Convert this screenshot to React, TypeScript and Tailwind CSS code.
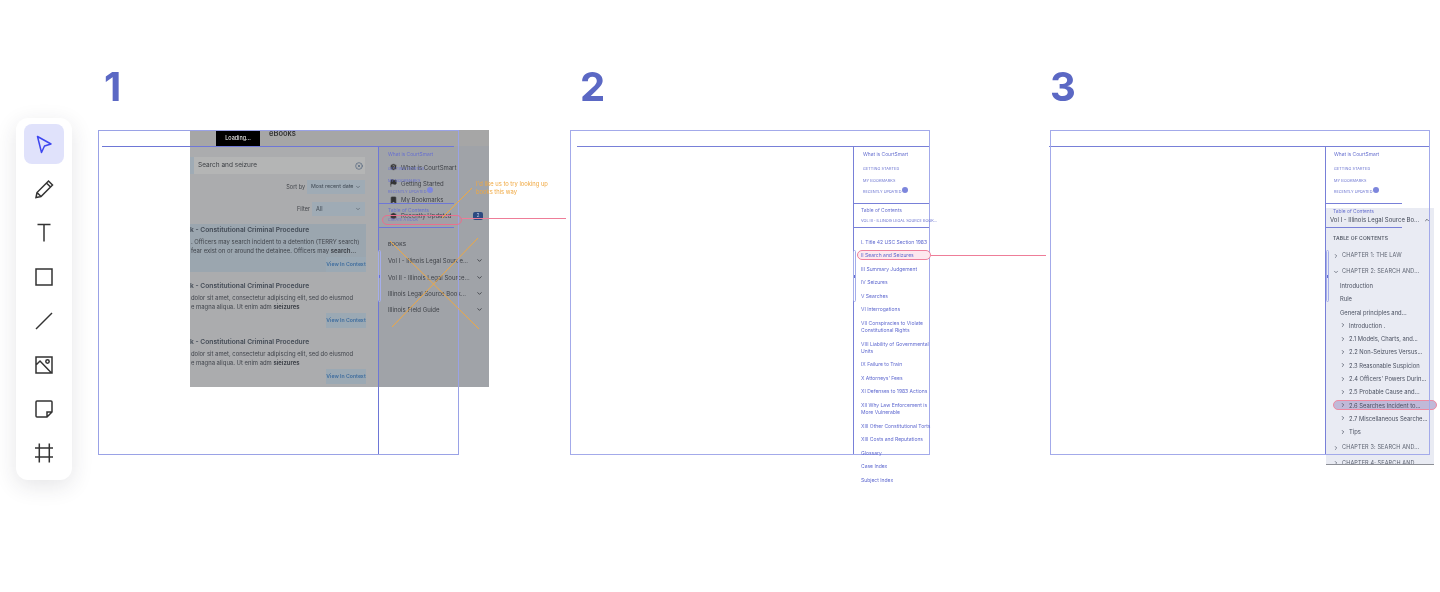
import { ChevronDown, ChevronRight, ChevronUp, CircleHelp, Flag, Bookmark, Clock, CircleX } from "lucide-react";

const tocItems = [
  "I. Title 42 USC Section 1983",
  "II Search and Seizures",
  "III Summary Judgement",
  "IV Seizures",
  "V Searches",
  "VI Interrogations",
  "VII Conspiracies to Violate\nConstitutional Rights",
  "VIII Liability of Governmental\nUnits",
  "IX Failure to Train",
  "X Attorneys' Fees",
  "XI Defenses to 1983 Actions",
  "XII Why Law Enforcement is\nMore Vulnerable",
  "XIII Other Constitutional Torts",
  "XIII Costs and Reputations",
  "Glossary",
  "Case Index",
  "Subject Index",
];

const subChapters = [
  "Introduction .",
  "2.1 Models, Charts, and...",
  "2.2 Non-Seizures Versus...",
  "2.3 Reasonable Suspicion",
  "2.4 Officers' Powers Durin...",
  "2.5 Probable Cause and...",
  "2.6 Searches Incident to...",
  "2.7 Miscellaneous Searche...",
  "Tips",
];

const books = ["Vol I - Illinois Legal Source...", "Vol II - Illinois Legal Source...", "Illinois Legal Source Book...", "Illinois Field Guide"];

function Toolbar() {
  const icon = "w-6 h-6 fill-none stroke-[#333] stroke-[1.5]";
  return (
    <div className="absolute left-4 top-[118px] w-14 h-[362px] bg-white rounded-xl shadow-[0_6px_22px_rgba(40,40,60,0.12)] flex flex-col items-center pt-[6px]">
      <button className="w-10 h-10 shrink-0 rounded-lg bg-[#e0e2fb] flex items-center justify-center">
        <svg viewBox="0 0 24 24" className="w-6 h-6 fill-none stroke-[#3d46f0] stroke-[1.5]">
          <path d="M5.5 4.500 19 12 12.500 14 9.500 20.500Z" strokeLinejoin="round" />
        </svg>
      </button>
      <div className="flex flex-col items-center gap-5 mt-[13px]">
        <svg viewBox="0 0 24 24" className={icon}>
          <path d="M4 20.500 5 15.500 16.500 4 20.500 8 9 19.500ZM14.500 6 18.500 10M5 15.500 9 19.500" />
        </svg>
        <svg viewBox="0 0 24 24" className={icon}>
          <path d="M5.500 3.500h13M12 3.500v17" />
        </svg>
        <svg viewBox="0 0 24 24" className={icon}>
          <path d="M4 4h16v16H4z" />
        </svg>
        <svg viewBox="0 0 24 24" className={icon}>
          <path d="M4 20 20 4" />
        </svg>
        <svg viewBox="0 0 24 24" className={icon}>
          <path d="M4 4h16v16H4zM4 12l4-4 11 11.500" />
          <circle cx="15.500" cy="8.500" r="1.700" />
        </svg>
        <svg viewBox="0 0 24 24" className={icon}>
          <path d="M15 20H5a1 1 0 0 1-1-1V5a1 1 0 0 1 1-1h14a1 1 0 0 1 1 1v10ZM15 20v-5h5" />
        </svg>
        <svg viewBox="0 0 24 24" className={icon}>
          <path d="M7.300 2.500v19M17.300 2.500v19M3 7h18M3 16h18" />
        </svg>
      </div>
    </div>
  );
}

function ResultCard({ tinted, lines }: { tinted?: boolean; lines: React.ReactNode[] }) {
  return (
    <div className={`w-[176px] h-[48px] pt-[1px] relative ${tinted ? "bg-[#9ba6af]" : ""}`}>
      <div className="text-[6.700px] leading-[10px] font-semibold text-[#434b56] whitespace-nowrap">k - Constitutional Criminal Procedure</div>
      <div className="mt-[1.500px] text-[5.900px] leading-[9px] text-[#41454c] whitespace-nowrap pl-[1px]">
        {lines.map((l, i) => (
          <div key={i}>{l}</div>
        ))}
      </div>
      <div className="absolute right-0 bottom-0 w-10 h-[15px] bg-[#9ba9b4] flex items-center justify-center text-[5.200px] font-semibold text-[#3f6d9e] whitespace-nowrap">
        View In Context
      </div>
    </div>
  );
}

function ScreenOverlay() {
  return (
    <div className="absolute left-[190px] top-[130px] w-[299px] h-[257px] bg-[#abacae] overflow-hidden flex flex-col">
      <div className="h-[16px] shrink-0 bg-[#a6a6a6] flex items-start">
        <div className="ml-[26px] w-[44px] h-[16px] bg-black text-white text-[5.500px] flex items-center justify-center">Loading...</div>
        <div className="ml-[9px] text-[7.500px] leading-[8px] font-semibold text-[#333]">eBooks</div>
      </div>
      <div className="flex flex-1">
        <div className="w-[188px] shrink-0">
          <div className="mt-[11px] w-[175px] h-[17px] bg-[#b4b5b5] border-l-[4px] border-[#9fabb5] flex items-center justify-between pl-[4px] pr-[2px] text-[6.500px] text-[#3e4146]">
            Search and seizure
            <CircleX className="w-[8px] h-[8px] text-[#4c5f78]" />
          </div>
          <div className="mt-[6px] w-[175px] h-[14px] flex items-center justify-end gap-[2px] text-[5.500px] text-[#44474c] whitespace-nowrap">
            Sort by
            <div className="w-[58px] h-[14px] bg-[#9fabb5] flex items-center justify-between px-[4px] text-[5.300px] text-[#3f4852]">
              Most recent date
              <ChevronDown className="w-[6px] h-[6px]" />
            </div>
          </div>
          <div className="mt-[8px] w-[175px] h-[14px] flex items-center justify-end gap-[2px] text-[5.500px] text-[#44474c]">
            Filter
            <div className="w-[53px] h-[14px] bg-[#9fabb5] flex items-center justify-between px-[4px] text-[#3f4852]">
              All
              <ChevronDown className="w-[6px] h-[6px]" />
            </div>
          </div>
          <div className="mt-[8px] flex flex-col gap-[8px]">
            <ResultCard
              tinted
              lines={[
                ". Officers may search incident to a detention (TERRY search)",
                <>
                  fear exist on or around the detainee. Officers may <b>search...</b>
                </>,
              ]}
            />
            <ResultCard
              lines={[
                "dolor sit amet, consectetur adipiscing elit, sed do eiusmod",
                <>
                  e magna aliqua. Ut enim adm <b>sieizures</b>
                </>,
              ]}
            />
            <ResultCard
              lines={[
                "dolor sit amet, consectetur adipiscing elit, sed do eiusmod",
                <>
                  e magna aliqua. Ut enim adm <b>sieizures</b>
                </>,
              ]}
            />
          </div>
        </div>
        <div className="flex-1 bg-[#a0a3a8] pl-[14px] pr-[6px] text-[#3f4248]">
          <div className="mt-[17px] flex flex-col gap-[8.300px] text-[6px] leading-[7px]">
            <div className="flex items-center gap-[3px] -ml-[3px]">
              <CircleHelp className="w-[9px] h-[8px] fill-[#333] text-[#a0a3a8]" />
              <span>What is CourtSmart</span>
            </div>
            <div className="flex items-center gap-[3px] -ml-[3px]">
              <Flag className="w-[9px] h-[8px] fill-[#333] text-[#333]" />
              <span>Getting Started</span>
            </div>
            <div className="flex items-center gap-[3px] -ml-[3px]">
              <Bookmark className="w-[9px] h-[8px] fill-[#333] text-[#333]" />
              <span>My Bookmarks</span>
            </div>
            <div className="flex items-center gap-[3px] -ml-[3px]">
              <Clock className="w-[9px] h-[8px] fill-[#333] text-[#a0a3a8]" />
              <span>Recently Updated</span>
              <span className="ml-auto w-[10px] h-[8px] rounded-[2px] bg-[#2c4a80] text-[#b8c4e0] text-[5px] flex items-center justify-center">2</span>
            </div>
          </div>
          <div className="mt-[21px] -ml-[4px] text-[5px] leading-[7px] font-medium tracking-wide">BOOKS</div>
          <div className="mt-[9.500px] -ml-[4px] flex flex-col gap-[9.300px] text-[6px] leading-[7px]">
            {books.map((b) => (
              <div key={b} className="flex items-center justify-between">
                <span className="whitespace-nowrap">{b}</span>
                <ChevronDown className="w-[7px] h-[7px] stroke-[3]" />
              </div>
            ))}
          </div>
        </div>
      </div>
    </div>
  );
}

function NavColumn() {
  return (
    <>
      <div className="text-[4.900px] leading-[7px] mt-[4px]">What is CourtSmart</div>
      <div className="mt-[7px] flex flex-col gap-[5px] text-[3.800px] leading-[7px] tracking-wide">
        <div>GETTING STARTED</div>
        <div>MY BOOKMARKS</div>
        <div className="flex items-center gap-[1px] -mt-[1px] tracking-normal">
          RECENTLY UPDATED
          <span className="w-[6px] h-[6px] rounded-full bg-[#7d86dc] -mt-[3px]" />
        </div>
      </div>
    </>
  );
}

function ScrollHandle({ className }: { className: string }) {
  return (
    <div className={`absolute w-[3px] h-[52px] rounded-sm border border-[#a5aeea] flex items-center ${className}`}>
      <span className="w-[2px] h-[3px] bg-[#6770cf]" />
    </div>
  );
}

function FrameOne() {
  return (
    <>
      <ScreenOverlay />
      <div className="absolute left-[98px] top-[130px] w-[361px] h-[325px] border border-[#9aa2e6]" />
      <div className="absolute left-[102px] top-[146px] w-[352px] h-px bg-[#6e77d6]" />
      <div className="absolute left-[378px] top-[146px] w-px h-[308px] bg-[#6e77d6]" />
      <div className="absolute left-[378px] top-[203px] w-[76px] h-px bg-[#6e77d6]" />
      <div className="absolute left-[378px] top-[227px] w-[76px] h-px bg-[#6e77d6]" />
      <ScrollHandle className="left-[378px] top-[250px]" />
      <div className="absolute left-[388px] top-[147px] text-[#6770cf] whitespace-nowrap">
        <NavColumn />
      </div>
      <div className="absolute left-[388px] top-[207px] text-[#6770cf] whitespace-nowrap">
        <div className="text-[4.900px] leading-[7px]">Table of Contents</div>
        <div className="mt-[2px] text-[3.800px] leading-[7px]">CREATE A BOOK</div>
      </div>
      <div className="absolute left-[382px] top-[215px] w-[80px] h-[10px] rounded-full border border-[#e8708e] bg-[#ee7d98]/5" />
      <div className="absolute left-[462px] top-[218px] w-[104px] h-px bg-[#ee7d98]" />
      <div className="absolute left-[476px] top-[180px] w-[80px] text-[5.800px] leading-[8px] text-[#f0a840]">
        I'd like us to try looking up books this way
      </div>
      <svg className="absolute left-0 top-0 w-[1440px] h-[592px] fill-none stroke-[#f0a840] stroke-[1]">
        <path d="M472 188 442 218M390 241 479 329M478 238 392 327" />
      </svg>
    </>
  );
}

function FrameTwo() {
  return (
    <>
      <div className="absolute left-[570px] top-[130px] w-[360px] h-[325px] border border-[#a3aaea]" />
      <div className="absolute left-[577px] top-[146px] w-[352px] h-px bg-[#7880d8]" />
      <div className="absolute left-[853px] top-[146px] w-px h-[308px] bg-[#7880d8]" />
      <div className="absolute left-[853px] top-[203px] w-[76px] h-px bg-[#7880d8]" />
      <div className="absolute left-[853px] top-[227px] w-[76px] h-px bg-[#7880d8]" />
      <ScrollHandle className="left-[853px] top-[250px]" />
      <div className="absolute left-[863px] top-[147px] text-[#6770cf] whitespace-nowrap">
        <NavColumn />
      </div>
      <div className="absolute left-[861px] top-[207px] text-[#6770cf] whitespace-nowrap">
        <div className="text-[4.900px] leading-[7px]">Table of Contents</div>
        <div className="mt-[3px] text-[3.800px] leading-[7px]">VOL III - ILLINOIS LEGAL SOURCE BOOK...</div>
      </div>
      <div className="absolute left-[857px] top-[250px] w-[74px] h-[10px] rounded-full border border-[#f0809c] bg-[#fde8ee]" />
      <div className="absolute left-[861px] top-[238.500px] flex flex-col gap-[6.600px] text-[5px] leading-[7px] text-[#5f69cf] whitespace-pre">
        {tocItems.map((t) => (
          <div key={t}>{t}</div>
        ))}
      </div>
      <div className="absolute left-[931px] top-[255px] w-[115px] h-px bg-[#ee7d98]" />
    </>
  );
}

function FrameThree() {
  return (
    <>
      <div className="absolute left-[1049px] top-[146px] w-[380px] h-px bg-[#7880d8]" />
      <div className="absolute left-[1325px] top-[146px] w-px h-[308px] bg-[#7880d8]" />
      <div className="absolute left-[1325px] top-[203px] w-[77px] h-px bg-[#7880d8]" />
      <div className="absolute left-[1334px] top-[147px] text-[#6770cf] whitespace-nowrap">
        <NavColumn />
      </div>
      <div className="absolute left-[1326px] top-[208px] w-[108px] h-[257px] bg-[#e9ebf3] border-b border-[#8d8f96] pl-[7px] text-[#5c6270]">
        <div className="text-[4.900px] leading-[7px] text-[#6770cf]">Table of Contents</div>
        <div className="mt-[1px] pr-[4px] flex items-center justify-between text-[6px] leading-[8px] text-[#444a58] -ml-[3px] whitespace-nowrap">
          Vol I - Illinois Legal Source Bo...
          <ChevronUp className="w-[6px] h-[6px] stroke-[3]" />
        </div>
        <div className="mt-[11px] text-[5px] leading-[7px] font-semibold tracking-wide text-[#555b68]">TABLE OF CONTENTS</div>
        <div className="mt-[10px] flex items-center gap-[3px] text-[5.500px] leading-[7px] tracking-wide">
          <ChevronRight className="w-[6px] h-[6px] stroke-[3]" />
          CHAPTER 1: THE LAW
        </div>
        <div className="mt-[9px] flex items-center gap-[3px] text-[5.500px] leading-[7px] tracking-wide">
          <ChevronDown className="w-[6px] h-[6px] stroke-[3]" />
          CHAPTER 2: SEARCH AND...
        </div>
        <div className="mt-[7px] ml-[7px] flex flex-col gap-[6.300px] text-[5.800px] leading-[7px] text-[#4a5060]">
          <div>Introduction</div>
          <div>Rule</div>
          <div>General principles and...</div>
          {subChapters.map((s) => (
            <div key={s} className={`flex items-center gap-[3px] whitespace-nowrap ${s.startsWith("2.6") ? "relative" : ""}`}>
              {s.startsWith("2.6") && <span className="absolute -left-[7px] -top-[1.500px] w-[104px] h-[10px] rounded-full border border-[#ee8aa2] bg-[#c0b9d8]" />}
              <ChevronRight className="relative w-[6px] h-[6px] stroke-[3]" />
              <span className="relative">{s}</span>
            </div>
          ))}
        </div>
        <div className="mt-[9px] flex items-center gap-[3px] text-[5.500px] leading-[7px] tracking-wide">
          <ChevronRight className="w-[6px] h-[6px] stroke-[3]" />
          CHAPTER 3: SEARCH AND...
        </div>
        <div className="mt-[9px] h-[4px] overflow-hidden flex items-start gap-[3px] text-[5.500px] leading-[7px] tracking-wide">
          <ChevronRight className="w-[6px] h-[6px] stroke-[3]" />
          CHAPTER 4: SEARCH AND...
        </div>
      </div>
      <div className="absolute left-[1050px] top-[130px] w-[380px] h-[325px] border border-[#a3aaea]" />
      <div className="absolute left-[1325px] top-[227px] w-[77px] h-px bg-[#7880d8]" />
      <ScrollHandle className="left-[1326px] top-[250px]" />
    </>
  );
}

export default function App() {
  const digit = "absolute top-[62px] text-[40px] leading-[50px] font-bold text-[#5b68c4]";
  return (
    <div className="relative w-[1440px] h-[592px] bg-white overflow-hidden font-['Inter',sans-serif] blur-[0.3px]">
      <Toolbar />
      <div className={`${digit} left-[104px]`}>1</div>
      <div className={`${digit} left-[580px]`}>2</div>
      <div className={`${digit} left-[1050px]`}>3</div>
      <FrameOne />
      <FrameTwo />
      <FrameThree />
    </div>
  );
}
